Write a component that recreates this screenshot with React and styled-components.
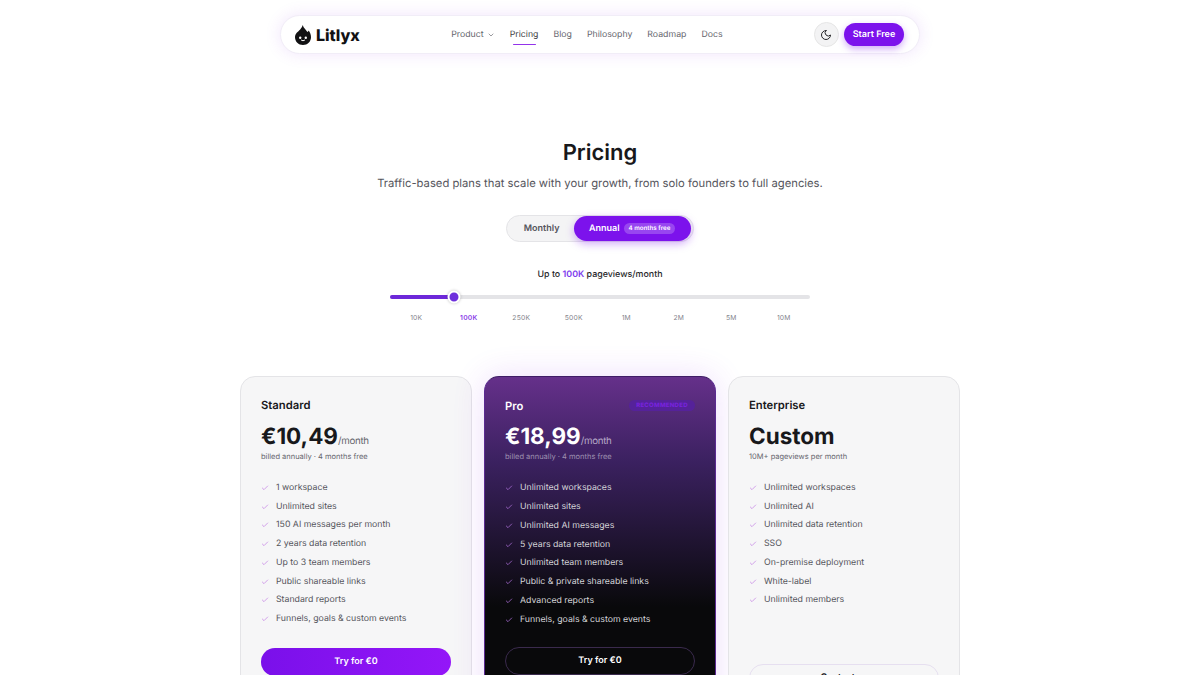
import React from 'react'
import styled, { createGlobalStyle } from 'styled-components'

const Global = createGlobalStyle`
  html, body {
    margin: 0;
    height: 675px;
    overflow: hidden;
    background: #fff;
    font-family: Inter, "Liberation Sans", sans-serif;
    color: #111113;
  }
  * {
    box-sizing: border-box;
    text-rendering: geometricPrecision;
  }
`

const Page = styled.div`
  width: 1200px;
  height: 675px;
  overflow: hidden;
  display: flex;
  flex-direction: column;
  align-items: center;
  padding-top: 15px;
`

const Nav = styled.nav`
  width: 640px;
  height: 39px;
  flex-shrink: 0;
  display: flex;
  align-items: center;
  justify-content: space-between;
  padding: 0 15px 0 14px;
  border-radius: 20px;
  background: #fff;
  border: 1px solid #f1edf7;
  box-shadow: 0 0 16px rgba(147, 51, 234, 0.13);
`

const Logo = styled.div`
  display: flex;
  align-items: center;
  gap: 5px;
  font-size: 16px;
  font-weight: 800;
  color: #111113;
`

const NavLinks = styled.div`
  display: flex;
  align-items: center;
  gap: 15px;
`

const NavLink = styled.a`
  position: relative;
  display: flex;
  align-items: center;
  gap: 3px;
  font-size: 8.75px;
  line-height: 14px;
  color: ${p => (p.$active ? '#3f3f46' : '#66666e')};
  &::after {
    content: '';
    display: ${p => (p.$active ? 'block' : 'none')};
    position: absolute;
    left: 3px;
    right: 2px;
    bottom: -3.5px;
    height: 1.5px;
    border-radius: 1px;
    background: #9333ea;
  }
`

const NavActions = styled.div`
  display: flex;
  align-items: center;
  gap: 5px;
`

const ThemeButton = styled.button`
  width: 25px;
  height: 25px;
  padding: 0;
  display: flex;
  align-items: center;
  justify-content: center;
  border-radius: 50%;
  border: 1px solid #e6e6e6;
  background: #f3f3f4;
  color: #27272a;
`

const StartButton = styled.button`
  width: 60px;
  height: 23px;
  padding: 0;
  border: 0;
  border-radius: 12px;
  background: #7c12ec;
  color: #fff;
  font: 600 9px Inter, sans-serif;
  box-shadow: 0 3px 7px rgba(124, 18, 236, 0.35);
`

const Title = styled.h1`
  margin: 84px 0 0;
  font-size: 22px;
  line-height: 30px;
  font-weight: 600;
  color: #18181b;
`

const Subtitle = styled.p`
  margin: 6px 0 0;
  font-size: 11.25px;
  line-height: 18px;
  color: #55555c;
`

const Toggle = styled.div`
  margin-top: 23px;
  width: 188px;
  height: 31px;
  display: flex;
  align-items: center;
  padding: 0 2.5px;
  border-radius: 16px;
  background: #f4f4f5;
  border: 1px solid #e4e4e7;
`

const ToggleOption = styled.div`
  height: 25px;
  display: flex;
  align-items: center;
  justify-content: center;
  gap: 4px;
  border-radius: 13px;
  font-size: 9px;
  font-weight: 600;
  ${p => (p.$active
    ? 'width: 117px; background: #7c12ec; color: #fff; box-shadow: 0 3px 8px rgba(124, 18, 236, 0.35);'
    : 'width: 64.500px; color: #55555c;')}
`

const FreeBadge = styled.span`
  padding: 2px 5px;
  border-radius: 8px;
  background: rgba(255, 255, 255, 0.22);
  font-size: 6.200px;
  line-height: 7px;
  font-weight: 600;
`

const SliderLabel = styled.div`
  margin-top: 26px;
  font-size: 8.900px;
  line-height: 14px;
  font-weight: 500;
  color: #27272a;
  b {
    font-weight: 600;
    color: #7c3aed;
  }
`

const SliderBox = styled.div`
  margin-top: 13px;
  width: 420px;
`

const Track = styled.div`
  position: relative;
  height: 4px;
  border-radius: 2px;
  background: #e4e4e7;
`

const TrackFill = styled.div`
  height: 100%;
  border-radius: 2px;
  background: #6d28d9;
`

const Thumb = styled.div`
  position: absolute;
  top: 50%;
  width: 13px;
  height: 13px;
  transform: translate(-50%, -50%);
  border-radius: 50%;
  background: #6d2fdc;
  border: 2px solid #fff;
  box-shadow: 0 0 3px rgba(0, 0, 0, 0.25);
`

const Ticks = styled.div`
  margin-top: 14px;
  display: grid;
  grid-template-columns: repeat(8, 52.5px);
`

const Tick = styled.span`
  text-align: center;
  font-size: 6.750px;
  line-height: 10px;
  font-weight: ${p => (p.$active ? 600 : 400)};
  letter-spacing: 0.2px;
  color: ${p => (p.$active ? '#8b3fe8' : '#85858d')};
`

const Cards = styled.div`
  margin-top: 53px;
  width: 720px;
  flex-shrink: 0;
  display: grid;
  grid-template-columns: repeat(3, 232px);
  gap: 12px;
  align-items: stretch;
`

const Card = styled.section`
  height: 340px;
  padding: ${p => (p.$pro ? '19.500px' : '19px')} 20px 0;
  display: flex;
  flex-direction: column;
  border-radius: 15px;
  background: ${p => (p.$pro
    ? 'linear-gradient(180deg, #65308a 0%, #3b2160 25%, #09090b 68%, #09090b 100%)'
    : '#f6f6f7')};
  border: 1px solid ${p => (p.$pro ? '#5b2a91' : '#e4e4e7')};
  border-top-color: ${p => (p.$pro ? '#3f1d66' : '#e4e4e7')};
  color: ${p => (p.$pro ? '#fff' : '#18181b')};
  box-shadow: ${p => (p.$pro ? '0 0 32px rgba(147, 51, 234, 0.16)' : 'none')};
`

const CardHead = styled.div`
  height: 18px;
  display: flex;
  align-items: center;
  justify-content: space-between;
`

const PlanName = styled.h2`
  margin: 0;
  font-size: 11.250px;
  font-weight: 600;
`

const Recommended = styled.span`
  width: 66px;
  height: 11px;
  display: flex;
  align-items: center;
  justify-content: center;
  border-radius: 6px;
  background: #55229a;
  color: #7a22e0;
  font-size: 6px;
  font-weight: 700;
  letter-spacing: 0.3px;
`

const PriceRow = styled.div`
  margin-top: 9.500px;
  display: flex;
  align-items: baseline;
  height: 26px;
`

const Price = styled.span`
  font-size: 22.500px;
  line-height: 26px;
  font-weight: 700;
`

const Per = styled.span`
  font-size: 9.750px;
  letter-spacing: -0.3px;
  color: ${p => (p.$pro ? '#b7a9c8' : '#66666e')};
`

const Billed = styled.div`
  margin-top: 1px;
  font-size: 7.500px;
  line-height: 12px;
  color: ${p => (p.$pro ? '#9d8fb0' : '#66666e')};
`

const Features = styled.ul`
  list-style: none;
  margin: 18.400px 0 0;
  padding: 0;
  display: flex;
  flex-direction: column;
  gap: 4.750px;
`

const Feature = styled.li`
  height: 14px;
  display: flex;
  align-items: center;
  gap: 7px;
  font-size: 8.750px;
  line-height: 14px;
  color: ${p => (p.$pro ? '#d4d4d8' : '#55555c')};
  svg {
    flex-shrink: 0;
    color: ${p => (p.$pro ? '#a76bd2' : '#c98ce6')};
  }
`

const CardButton = styled.button`
  flex-shrink: 0;
  width: 100%;
  height: 28px;
  margin-top: ${p => p.$gap}px;
  padding: 0;
  border-radius: 14px;
  font: 600 9px Inter, sans-serif;
  color: ${p => (p.$variant === 'outline-light' ? '#18181b' : '#fff')};
  background: ${p => (p.$variant === 'solid' ? 'linear-gradient(90deg, #7a10ea, #9416f8)' : 'transparent')};
  border: ${p => (p.$variant === 'solid' ? '0' : p.$variant === 'outline-dark' ? '1px solid #3a2a4d' : '1px solid #e6dff0')};
`

const Check = () => (
  <svg width="8" height="8" viewBox="0 0 24 24" fill="none" stroke="currentColor" strokeWidth="2.4" strokeLinecap="round" strokeLinejoin="round">
    <path d="M20 6 9 17l-5-5" />
  </svg>
)

const Flame = () => (
  <svg width="16" height="20" viewBox="0 0 16 20">
    <path fill="#111113" d="M7.800 0C8.200 2.800 10.800 4.500 12.400 7 13.200 6.500 13.600 6 13.600 5.400 15.200 7.500 16 9.500 16 12.300 16 16.800 12.500 20 8 20S0 16.800 0 12.300C0 8.300 3 6.800 5.200 4.400 6.400 3 7.400 1.500 7.800 0Z" />
    <circle cx="5.200" cy="12.700" r="1.200" fill="#fff" />
    <circle cx="10.800" cy="12.700" r="1.200" fill="#fff" />
    <path d="M6.400 15.200c.8.700 2.400.700 3.200 0" stroke="#fff" strokeWidth="1" fill="none" strokeLinecap="round" />
  </svg>
)

const Moon = () => (
  <svg width="12" height="12" viewBox="0 0 24 24" fill="none" stroke="currentColor" strokeWidth="2" strokeLinecap="round" strokeLinejoin="round">
    <path d="M12 3a6 6 0 0 0 9 9 9 9 0 1 1-9-9Z" />
  </svg>
)

const Chevron = () => (
  <svg width="8" height="8" viewBox="0 0 24 24" fill="none" stroke="currentColor" strokeWidth="2" strokeLinecap="round" strokeLinejoin="round">
    <path d="m6 9 6 6 6-6" />
  </svg>
)

const ticks = ['10K', '100K', '250K', '500K', '1M', '2M', '5M', '10M']

const plans = [
  {
    name: 'Standard',
    price: '€10,49',
    per: '/month',
    billed: 'billed annually · 4 months free',
    button: 'Try for €0',
    variant: 'solid',
    gap: 21.5,
    features: [
      '1 workspace',
      'Unlimited sites',
      '150 AI messages per month',
      '2 years data retention',
      'Up to 3 team members',
      'Public shareable links',
      'Standard reports',
      'Funnels, goals & custom events',
    ],
  },
  {
    name: 'Pro',
    pro: true,
    price: '€18,99',
    per: '/month',
    billed: 'billed annually · 4 months free',
    button: 'Try for €0',
    variant: 'outline-dark',
    gap: 20,
    features: [
      'Unlimited workspaces',
      'Unlimited sites',
      'Unlimited AI messages',
      '5 years data retention',
      'Unlimited team members',
      'Public & private shareable links',
      'Advanced reports',
      'Funnels, goals & custom events',
    ],
  },
  {
    name: 'Enterprise',
    price: 'Custom',
    billed: '10M+ pageviews per month',
    button: 'Contact us',
    variant: 'outline-light',
    gap: 56.5,
    features: [
      'Unlimited workspaces',
      'Unlimited AI',
      'Unlimited data retention',
      'SSO',
      'On-premise deployment',
      'White-label',
      'Unlimited members',
    ],
  },
]

const App = () => (
  <Page>
    <Global />
    <Nav>
      <Logo><Flame />Litlyx</Logo>
      <NavLinks>
        <NavLink>Product <Chevron /></NavLink>
        <NavLink $active>Pricing</NavLink>
        <NavLink>Blog</NavLink>
        <NavLink>Philosophy</NavLink>
        <NavLink>Roadmap</NavLink>
        <NavLink>Docs</NavLink>
      </NavLinks>
      <NavActions>
        <ThemeButton><Moon /></ThemeButton>
        <StartButton>Start Free</StartButton>
      </NavActions>
    </Nav>

    <Title>Pricing</Title>
    <Subtitle>Traffic-based plans that scale with your growth, from solo founders to full agencies.</Subtitle>

    <Toggle>
      <ToggleOption>Monthly</ToggleOption>
      <ToggleOption $active>Annual <FreeBadge>4 months free</FreeBadge></ToggleOption>
    </Toggle>

    <SliderLabel>Up to <b>100K</b> pageviews/month</SliderLabel>
    <SliderBox>
      <Track>
        <TrackFill style={{ width: '15.3%' }} />
        <Thumb style={{ left: '15.3%' }} />
      </Track>
      <Ticks>
        {ticks.map(t => <Tick key={t} $active={t === '100K'}>{t}</Tick>)}
      </Ticks>
    </SliderBox>

    <Cards>
      {plans.map(plan => (
        <Card key={plan.name} $pro={plan.pro}>
          <CardHead>
            <PlanName>{plan.name}</PlanName>
            {plan.pro && <Recommended>RECOMMENDED</Recommended>}
          </CardHead>
          <PriceRow>
            <Price>{plan.price}</Price>
            {plan.per && <Per $pro={plan.pro}>{plan.per}</Per>}
          </PriceRow>
          <Billed $pro={plan.pro}>{plan.billed}</Billed>
          <Features>
            {plan.features.map(f => (
              <Feature key={f} $pro={plan.pro}><Check />{f}</Feature>
            ))}
          </Features>
          <CardButton $variant={plan.variant} $gap={plan.gap}>{plan.button}</CardButton>
        </Card>
      ))}
    </Cards>
  </Page>
)

export default App
